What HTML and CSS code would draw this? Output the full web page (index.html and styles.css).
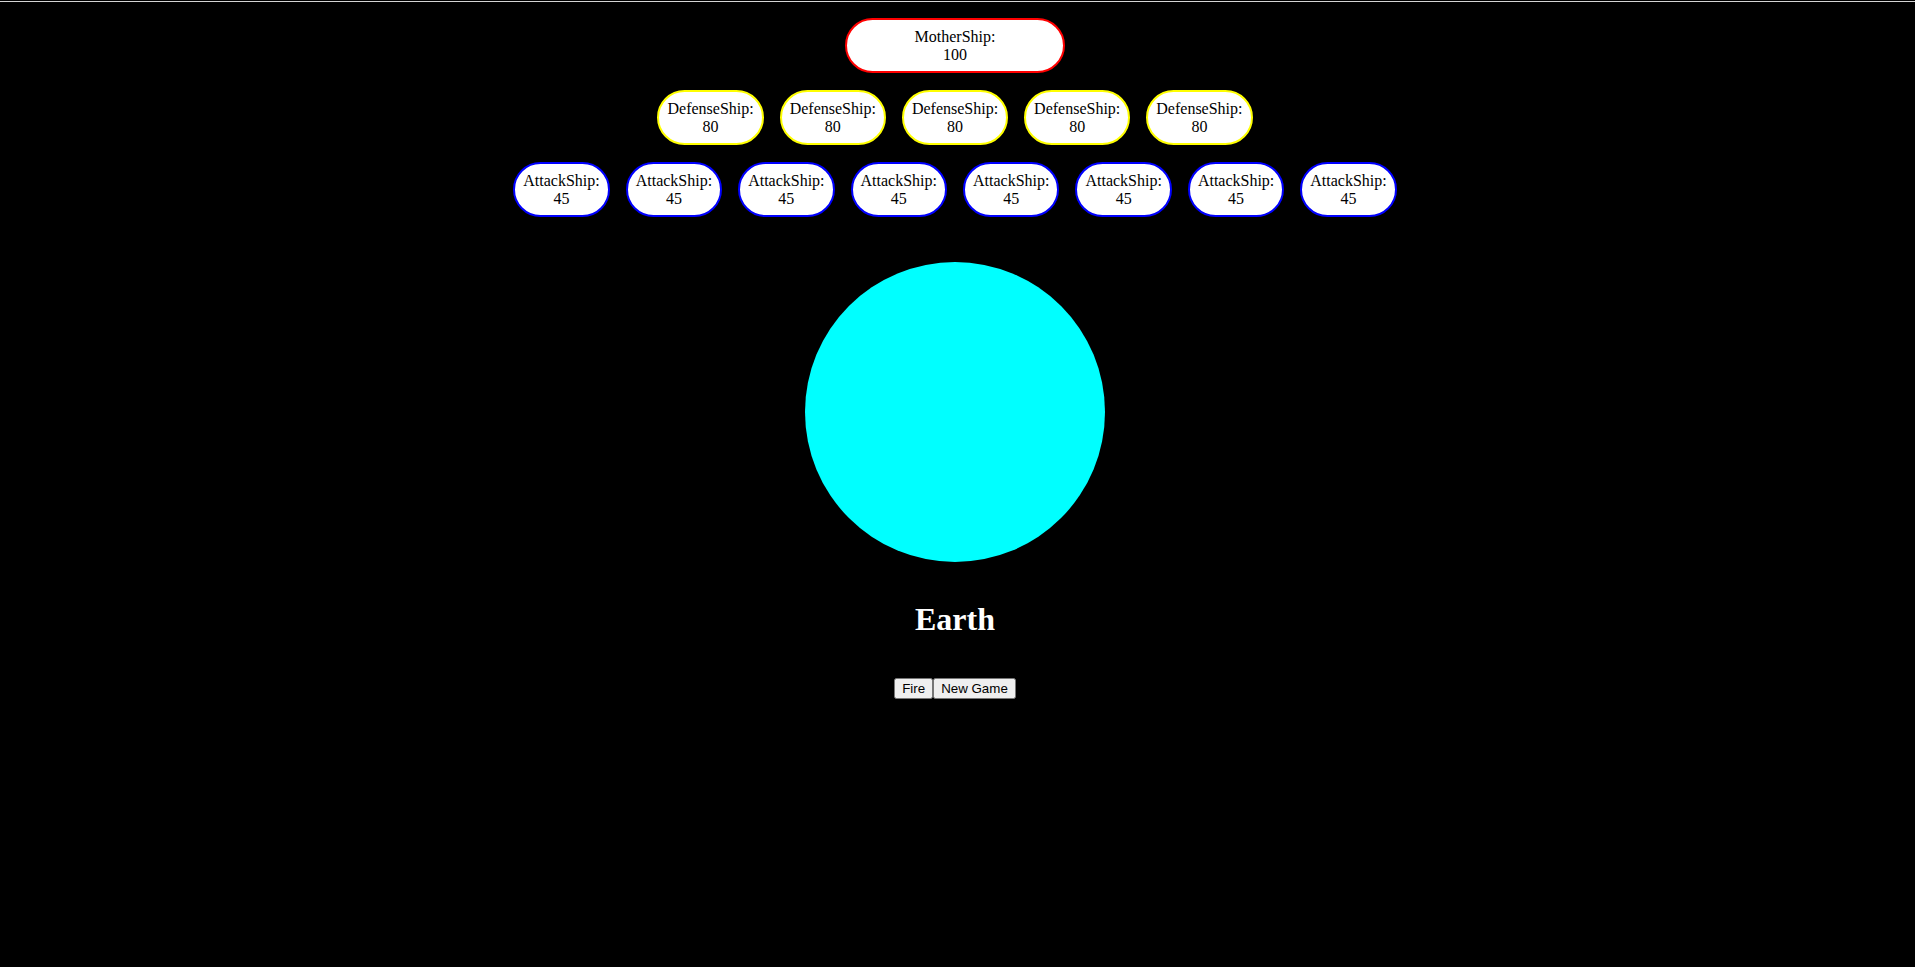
FILE: index.html
```html
<!DOCTYPE html>
<html lang="en">
<head>
<meta charset="utf-8">
<title>Space Battle</title>
<link rel="stylesheet" href="styles.css">
</head>
<body>
<div class="topline"></div>
<main class="game">
  <div class="fleet">
    <div class="row">
      <div class="ship mother">MotherShip:<br>100</div>
    </div>
    <div class="row">
      <div class="ship defense">DefenseShip:<br>80</div>
      <div class="ship defense">DefenseShip:<br>80</div>
      <div class="ship defense">DefenseShip:<br>80</div>
      <div class="ship defense">DefenseShip:<br>80</div>
      <div class="ship defense">DefenseShip:<br>80</div>
    </div>
    <div class="row">
      <div class="ship attack">AttackShip:<br>45</div>
      <div class="ship attack">AttackShip:<br>45</div>
      <div class="ship attack">AttackShip:<br>45</div>
      <div class="ship attack">AttackShip:<br>45</div>
      <div class="ship attack">AttackShip:<br>45</div>
      <div class="ship attack">AttackShip:<br>45</div>
      <div class="ship attack">AttackShip:<br>45</div>
      <div class="ship attack">AttackShip:<br>45</div>
    </div>
  </div>
  <div class="planet"></div>
  <h1 class="planet-name">Earth</h1>
  <div class="controls"><button class="btn">Fire</button><button class="btn">New Game</button></div>
</main>
</body>
</html>
```
FILE: styles.css
```css
html, body {
  background: #000;
}
body {
  margin: 0;
  font-family: "Liberation Serif", "Times New Roman", serif;
  font-size: 16px;
  color: #000;
}
.topline {
  height: 1px;
  margin-top: 1px;
  background: #d4d4d4;
}
.game {
  display: flex;
  flex-direction: column;
  align-items: center;
  padding: 16px 5px 0 0;
}
.fleet {
  display: flex;
  flex-direction: column;
  align-items: center;
  gap: 17px;
}
.row {
  display: flex;
  justify-content: center;
  gap: 16px;
}
.ship {
  box-sizing: border-box;
  height: 55px;
  background: #fff;
  border: 2px solid;
  border-radius: 30px;
  padding: 8px 8px 0;
  text-align: center;
  line-height: 18px;
}
.mother {
  width: 220px;
  border-color: #f00;
}
.defense {
  border-color: #ff0;
}
.attack {
  border-color: #00f;
}
.planet {
  width: 300px;
  height: 300px;
  margin-top: 45px;
  border-radius: 50%;
  background: #0ff;
}
.planet-name {
  margin: 39px 0 0;
  font-size: 32px;
  line-height: 37px;
  font-weight: bold;
  color: #fff;
}
.controls {
  display: flex;
  margin-top: 40px;
}
.btn {
  font-family: "Liberation Sans", Arial, sans-serif;
  font-size: 13.333px;
}
```
